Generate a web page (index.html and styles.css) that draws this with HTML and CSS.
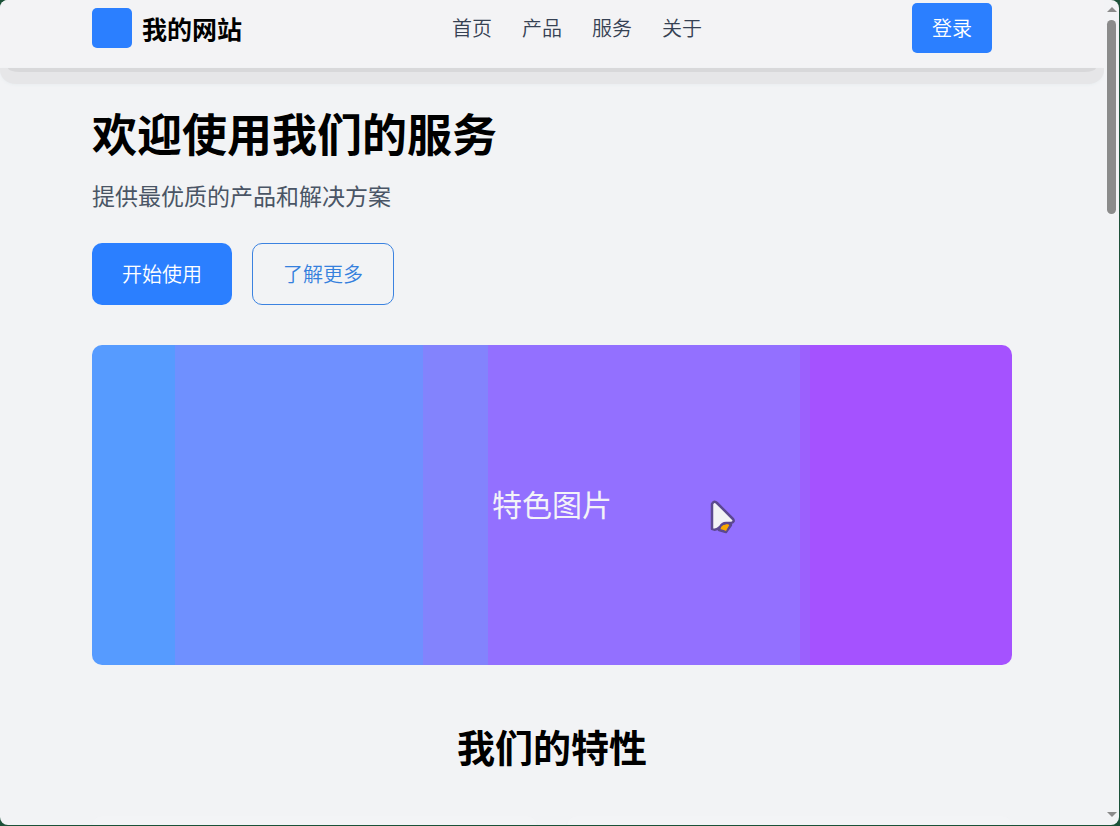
FILE: index.html
```html
<!DOCTYPE html>
<html lang="zh-CN">
<head>
  <meta charset="UTF-8">
  <meta name="viewport" content="width=device-width, initial-scale=1.0">
  <title>我的网站</title>
  <link rel="stylesheet" href="styles.css">
</head>
<body>
  <div class="window">
    <div class="page">
      <header class="header">
        <div class="container header-inner">
          <div class="brand">
            <span class="logo"></span>
            <span class="site-name">我的网站</span>
          </div>
          <nav class="nav">
            <a href="#">首页</a>
            <a href="#">产品</a>
            <a href="#">服务</a>
            <a href="#">关于</a>
          </nav>
          <button class="login" type="button">登录</button>
        </div>
      </header>

      <main class="container">
        <section class="hero">
          <h1>欢迎使用我们的服务</h1>
          <p>提供最优质的产品和解决方案</p>
          <div class="actions">
            <button class="btn btn-primary" type="button">开始使用</button>
            <button class="btn btn-outline" type="button">了解更多</button>
          </div>
          <div class="banner">
            <span>特色图片</span>
            <svg class="cursor" width="28" height="36" viewBox="0 0 28 36" aria-hidden="true">
              <path d="M12 26 L20 23 L23 26 L18 33 L11 31 Z" fill="#f8a800" stroke="#5b4890" stroke-width="2.5" stroke-linejoin="round"/>
              <path d="M4 5 Q6 1 9 4 L25 20 Q27 23 23 24 L18 24 Q14 24 12 28 Q8 32 4 30 Z" fill="#f2f2f5" stroke="#5b4890" stroke-width="2.5" stroke-linejoin="round"/>
              <path d="M13 29 Q15 25 21 26 L18 32 Z" fill="#f8a800"/>
            </svg>
          </div>
        </section>

        <section class="features">
          <h2>我们的特性</h2>
          <div class="cards">
            <div class="card"></div>
            <div class="card"></div>
          </div>
        </section>
      </main>
    </div>

    <div class="scrollbar" aria-hidden="true">
      <span class="arrow arrow-up"></span>
      <span class="thumb"></span>
      <span class="arrow arrow-down"></span>
    </div>
  </div>
</body>
</html>
```

FILE: styles.css
```css
* {
  box-sizing: border-box;
}

body {
  margin: 0;
  background: #1b5138;
  color: #000;
  font-family: "Noto Sans CJK SC", sans-serif;
  font-size: 20px;
  line-height: 30px;
}

button {
  font-family: inherit;
  font-size: 20px;
  font-weight: 350;
  line-height: 30px;
  cursor: pointer;
}

.window {
  display: flex;
  height: calc(100vh - 1px);
  margin-right: 1px;
  background: #f2f3f5;
  border-radius: 8px;
  overflow: hidden;
}

.page {
  flex: 1;
  overflow: hidden;
}

.container {
  max-width: 920px;
  margin: 0 auto;
}

/* Header */
.header {
  position: relative;
  padding: 3px 0 15px;
  background: #f3f3f5;
}

.header::before,
.header::after {
  content: "";
  position: absolute;
  top: 100%;
  left: 0;
  right: 0;
  height: 16px;
  background: #e6e6e8;
  border-radius: 0 0 16px 16px / 0 0 14px 14px;
  box-shadow: 0 1px 3px #e9edf0;
}

.header::after {
  left: 8px;
  right: 8px;
  height: 4px;
  background: #d8d8da;
  border-radius: 0 0 12px 12px / 0 0 4px 4px;
  box-shadow: none;
}

.header-inner {
  display: flex;
  justify-content: space-between;
  align-items: center;
  padding-right: 20px;
}

.brand {
  display: flex;
  align-items: center;
  gap: 10px;
}

.logo {
  width: 40px;
  height: 40px;
  background: #2b7fff;
  border-radius: 5px;
}

.site-name {
  font-size: 25px;
  font-weight: 700;
}

.nav {
  display: flex;
  gap: 30px;
}

.nav a {
  color: #364153;
  font-weight: 350;
  text-decoration: none;
}

.login {
  padding: 10px 20px;
  background: #2b7fff;
  color: #fff;
  border: none;
  border-radius: 5px;
}

/* Hero */
.hero {
  padding: 40px 0;
}

.hero h1 {
  margin: 0 0 20px;
  font-size: 45px;
  line-height: 50px;
}

.hero p {
  margin: 0 0 30px;
  color: #4a5565;
  font-size: 23px;
  line-height: 35px;
}

.actions {
  display: flex;
  gap: 20px;
  margin-bottom: 40px;
}

.btn {
  padding: 15px 30px;
  border: none;
  border-radius: 10px;
}

.btn-primary {
  background: #2b7fff;
  color: #fff;
}

.btn-outline {
  background: transparent;
  border: 1px solid #3b82e0;
  color: #3580dd;
}

.banner {
  position: relative;
  display: flex;
  justify-content: center;
  align-items: center;
  height: 320px;
  padding-bottom: 5px;
  color: #f3f3f8;
  font-size: 30px;
  border-radius: 10px;
  background: linear-gradient(to right,
    #569bff 9%, #6f90ff 9% 36%, #8383fd 36% 43%,
    #9370ff 43% 77%, #9b60fd 77% 78%, #a552ff 78%);
}

.cursor {
  position: absolute;
  top: 48%;
  left: 67%;
}

/* Features */
.features {
  padding: 18px 0;
}

.features h2 {
  margin: 0 0 48px;
  font-size: 38px;
  line-height: 45px;
  text-align: center;
}

.cards {
  display: grid;
  grid-template-columns: 1fr 1fr;
  gap: 30px;
}

.card {
  min-height: 240px;
  background: #f3f4f6;
  border-radius: 10px;
  box-shadow: 0 2px 3px rgba(0, 0, 0, 0.06);
}

/* Scrollbar */
.scrollbar {
  display: flex;
  flex-direction: column;
  align-items: center;
  width: 15px;
  padding: 7px 0 8px;
}

.arrow {
  border: 5px solid transparent;
}

.arrow-up {
  border-top: none;
  border-bottom-color: #8b8b8b;
}

.arrow-down {
  margin-top: auto;
  border-bottom: none;
  border-top-color: #8b8b8b;
}

.thumb {
  width: 9px;
  height: 24%;
  margin-top: 8px;
  background: #8b8b8b;
  border-radius: 5px;
}
```
